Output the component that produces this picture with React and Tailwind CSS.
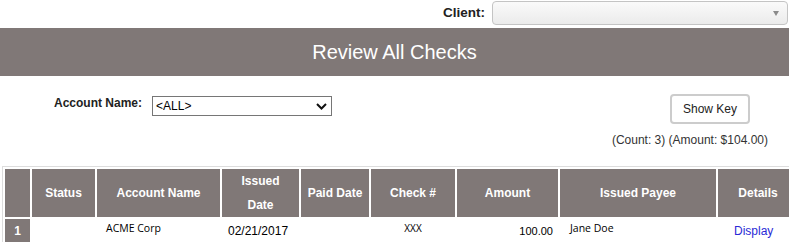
import React from "react";

export default function App() {
  const th =
    "p-0 h-[48px] bg-[#807877] text-white font-bold text-[12px] leading-[24px] text-center align-middle";
  return (
    <div className="w-[789px] h-[242px] overflow-hidden bg-white font-['Liberation_Sans',Arial,sans-serif] text-[#222]">
      {/* Client row */}
      <div className="flex items-start justify-end h-[28px] pt-[1px]">
        <span className="font-bold text-[13.5px] leading-[24px] text-[#222] mr-[7px]">Client:</span>
        <div className="relative w-[296px] h-[24px] mr-[1px] rounded-[4px] border border-[#c4c4c4] bg-gradient-to-b from-[#fafafa] to-[#ebebeb]">
          <div className="absolute right-[8px] top-[9px] w-0 h-0 border-l-[3.5px] border-r-[3.5px] border-t-[5px] border-l-transparent border-r-transparent border-t-[#8a8a8a]" />
        </div>
      </div>

      {/* Title bar */}
      <div className="h-[48px] bg-[#807877] flex items-center justify-center text-white text-[20px]">
        Review All Checks
      </div>

      {/* Account row */}
      <div className="flex items-start pt-[18px]">
        <div className="flex items-start ml-[54px] mt-[2px]">
          <span className="font-bold text-[12px] leading-[14px] text-[#222]">Account Name:</span>
          <div className="ml-[10px] w-[180px] h-[20px] border border-[#767676] flex items-center justify-between pl-[3px] pr-[4px] text-[12px] text-black">
            <span>&lt;ALL&gt;</span>
            <svg width="11" height="7" viewBox="0 0 11 7" className="block">
              <path d="M1 1 L5.5 5.5 L10 1" fill="none" stroke="#111" strokeWidth="2" />
            </svg>
          </div>
        </div>
        <div className="ml-auto mr-[39px] w-[80px] h-[30px] rounded-[4px] border-2 border-[#cccccc] bg-white flex items-center justify-center text-[12px] text-[#222]">
          Show Key
        </div>
      </div>

      {/* Count */}
      <div className="flex justify-end mt-[9px] mr-[21px] text-[12px] leading-[14px] text-[#333]">
        (Count: 3) (Amount: $104.00)
      </div>

      {/* Table */}
      <div className="mt-[19px] ml-[2px]">
        <table className="table-fixed border-separate border-spacing-[2px] border border-[#dddddd] w-[799px]">
          <thead>
            <tr>
              <th className={th + " w-[25px]"}></th>
              <th className={th + " w-[63px]"}>Status</th>
              <th className={th + " w-[123px]"}>Account Name</th>
              <th className={th + " w-[77px]"}>
                Issued
                <br />
                Date
              </th>
              <th className={th + " w-[68px]"}>Paid Date</th>
              <th className={th + " w-[84px]"}>Check #</th>
              <th className={th + " w-[101px]"}>Amount</th>
              <th className={th + " w-[156px]"}>Issued Payee</th>
              <th className={th + " w-[80px]"}>Details</th>
            </tr>
          </thead>
          <tbody>
            <tr>
              <td className="p-0 h-[24px] bg-[#807877] text-white text-[12px] font-bold text-center align-top pt-[5px] leading-[14px]">
                1
              </td>
              <td className="p-0"></td>
              <td className="p-0 align-top pl-[9px] pt-[2px] font-['Open_Sans',sans-serif] text-[10.5px] leading-[14px] text-black">
                ACME Corp
              </td>
              <td className="p-0 align-top pl-[6px] pt-[5px] text-[12px] leading-[14px] text-black">
                02/21/2017
              </td>
              <td className="p-0"></td>
              <td className="p-0 align-top text-center pt-[2px] font-['Open_Sans',sans-serif] text-[10px] leading-[14px] text-black">
                XXX
              </td>
              <td className="p-0 align-top text-right pr-[5px] pt-[5px] text-[11px] leading-[14px] text-black">
                100.00
              </td>
              <td className="p-0 align-top pl-[10px] pt-[2px] font-['Open_Sans',sans-serif] text-[10.5px] leading-[14px] text-black">
                Jane Doe
              </td>
              <td className="p-0 align-top pl-[16px] pt-[5px] text-[12px] leading-[14px] text-[#2a2ad6]">
                Display
              </td>
            </tr>
          </tbody>
        </table>
      </div>
    </div>
  );
}
